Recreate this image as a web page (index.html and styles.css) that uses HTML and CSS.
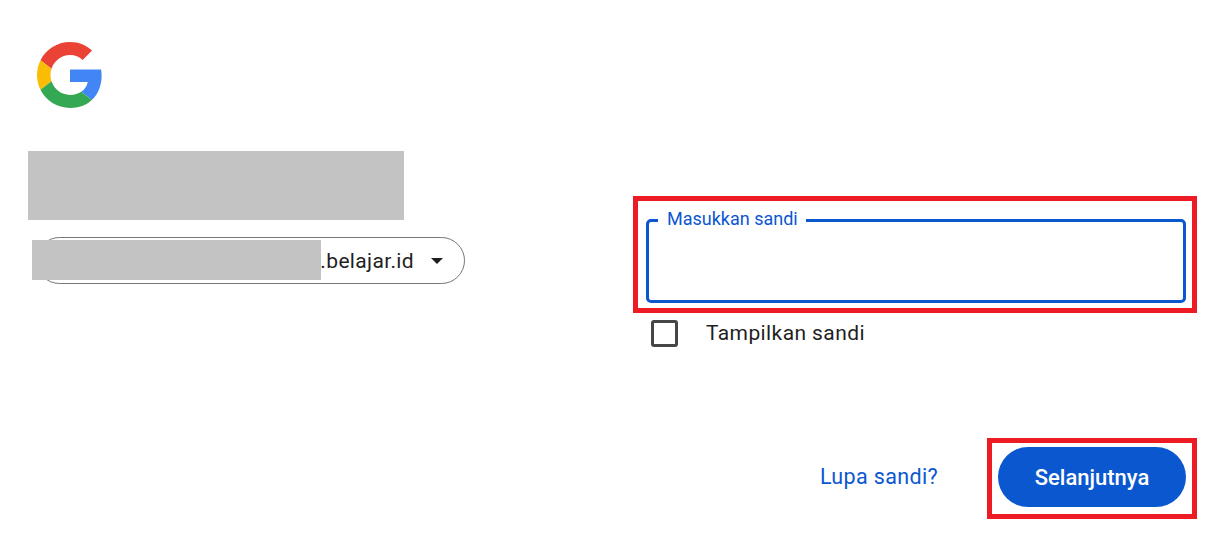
FILE: index.html
```html
<!DOCTYPE html>
<html lang="id">
<head>
  <meta charset="UTF-8">
  <title>Masukkan sandi</title>
  <link rel="stylesheet" href="styles.css">
</head>
<body>
  <main class="page">
    <!-- Left column: logo and account -->
    <section class="account">
      <svg class="logo" viewBox="0 0 48 48" aria-label="Google">
        <path fill="#EA4335" d="M24 9.5c3.54 0 6.71 1.22 9.21 3.6l6.85-6.85C35.9 2.38 30.47 0 24 0 14.62 0 6.51 5.38 2.56 13.22l7.98 6.19C12.43 13.72 17.74 9.5 24 9.5z"/>
        <path fill="#4285F4" d="M46.98 24.55c0-1.57-.15-3.09-.38-4.55H24v9.02h12.94c-.58 2.96-2.26 5.48-4.78 7.18l7.73 6c4.51-4.18 7.09-10.36 7.09-17.65z"/>
        <path fill="#FBBC05" d="M10.53 28.59c-.48-1.45-.76-2.99-.76-4.59s.27-3.14.76-4.59l-7.98-6.19C.92 16.46 0 20.12 0 24c0 3.88.92 7.54 2.56 10.78l7.97-6.19z"/>
        <path fill="#34A853" d="M24 48c6.48 0 11.93-2.13 15.89-5.81l-7.73-6c-2.15 1.45-4.92 2.3-8.16 2.3-6.26 0-11.57-4.22-13.47-9.91l-7.98 6.19C6.51 42.62 14.62 48 24 48z"/>
      </svg>
      <div class="redacted-title"></div>
      <div class="account-chip">
        <span class="redacted-email"></span>
        <span class="chip-text">.belajar.id</span>
        <span class="caret"></span>
      </div>
    </section>

    <!-- Right column: password form -->
    <section class="form">
      <div class="highlight highlight-field">
        <div class="field">
          <span class="field-label">Masukkan sandi</span>
        </div>
      </div>
      <label class="show-password">
        <span class="checkbox"></span>
        <span class="show-text">Tampilkan sandi</span>
      </label>
      <div class="actions">
        <a class="forgot" href="#">Lupa sandi?</a>
        <div class="highlight highlight-button">
          <button class="next-btn" type="button">Selanjutnya</button>
        </div>
      </div>
    </section>
  </main>
</body>
</html>
```

FILE: styles.css
```css
* {
  margin: 0;
  padding: 0;
  box-sizing: border-box;
}

body {
  background: #fff;
  color: #1f1f1f;
  font-family: 'Roboto', 'Liberation Sans', sans-serif;
  overflow: hidden;
}

.page {
  display: flex;
  justify-content: space-between;
  height: 540px;
  padding-right: 26px;
}

.account {
  width: 465px;
  padding: 42px 0 0 28px;
}

.logo {
  display: block;
  width: 66px;
  height: 66px;
  margin-left: 9px;
}

.redacted-title {
  width: 376px;
  height: 69px;
  margin-top: 43px;
  background: #c3c3c3;
}

.account-chip {
  position: relative;
  display: flex;
  align-items: center;
  justify-content: flex-end;
  width: 429px;
  height: 47px;
  margin: 17px 0 0 8px;
  padding-right: 21px;
  border: 1px solid #747775;
  border-radius: 24px;
  font-size: 21px;
  letter-spacing: 0.35px;
}

/* grey block laid over the start of the chip */
.redacted-email {
  position: absolute;
  left: -5px;
  top: 2px;
  width: 289px;
  height: 40px;
  background: #c3c3c3;
}

.caret {
  width: 0;
  height: 0;
  margin-left: 17px;
  border-left: 6px solid transparent;
  border-right: 6px solid transparent;
  border-top: 6px solid #1f1f1f;
}

.form {
  width: 564px;
  padding-top: 196px;
}

.highlight {
  border: 5px solid #ed1c24;
}

.highlight-field {
  height: 117px;
  padding: 18px 6px 0 8px;
}

.field {
  position: relative;
  height: 84px;
  border: 3px solid #0b57d0;
  border-radius: 5px;
}

/* label sits on the field border */
.field-label {
  position: absolute;
  left: 9px;
  top: -13px;
  padding: 0 8px 0 9px;
  background: #fff;
  color: #0b57d0;
  font-size: 18px;
  line-height: 20px;
}

.show-password {
  display: flex;
  align-items: center;
  gap: 28px;
  height: 27px;
  margin: 7px 0 0 18px;
  font-size: 21px;
  line-height: 26px;
  letter-spacing: 0.4px;
}

.show-text {
  margin-bottom: 2px;
}

.checkbox {
  width: 27px;
  height: 27px;
  border: 3px solid #444746;
  border-radius: 3px;
}

.actions {
  display: flex;
  align-items: center;
  justify-content: flex-end;
  gap: 49px;
  margin-top: 91px;
}

.forgot {
  margin-bottom: 4px;
  color: #0b57d0;
  font-size: 21.5px;
  letter-spacing: 0.35px;
  text-decoration: none;
}

.highlight-button {
  width: 210px;
  height: 81px;
  padding: 4px 6px 0 6px;
}

.next-btn {
  display: block;
  width: 188px;
  height: 60px;
  border: none;
  border-radius: 30px;
  background: #0b57d0;
  color: #fff;
  font-family: inherit;
  font-size: 22px;
  font-weight: 500;
  cursor: pointer;
}
```
